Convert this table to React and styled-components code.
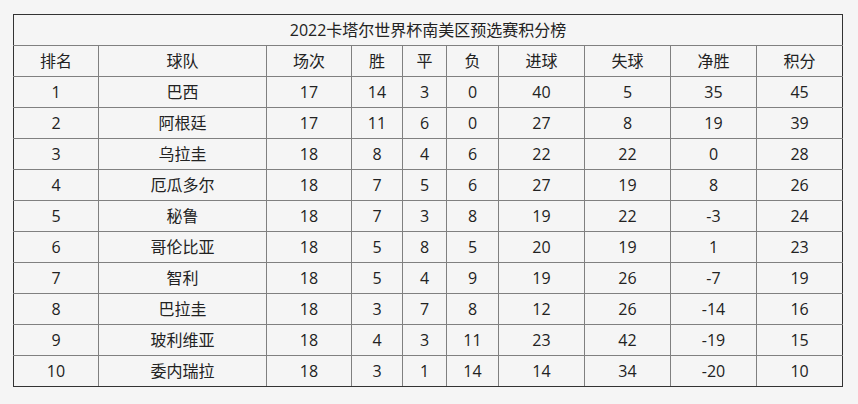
import { createGlobalStyle } from 'styled-components'
import styled from 'styled-components'

const GlobalStyle = createGlobalStyle`
  html, body {
    margin: 0;
    padding: 0;
    background: #f5f5f5;
  }
  body {
    font-family: "Open Sans", "Noto Sans CJK SC", sans-serif;
    color: #222;
  }
`

const columns = [
  { label: '排名', width: 85 },
  { label: '球队', width: 168 },
  { label: '场次', width: 85 },
  { label: '胜', width: 51 },
  { label: '平', width: 44 },
  { label: '负', width: 52 },
  { label: '进球', width: 86 },
  { label: '失球', width: 86 },
  { label: '净胜', width: 86 },
  { label: '积分', width: 86 },
]

const rows = [
  [1, '巴西', 17, 14, 3, 0, 40, 5, 35, 45],
  [2, '阿根廷', 17, 11, 6, 0, 27, 8, 19, 39],
  [3, '乌拉圭', 18, 8, 4, 6, 22, 22, 0, 28],
  [4, '厄瓜多尔', 18, 7, 5, 6, 27, 19, 8, 26],
  [5, '秘鲁', 18, 7, 3, 8, 19, 22, -3, 24],
  [6, '哥伦比亚', 18, 5, 8, 5, 20, 19, 1, 23],
  [7, '智利', 18, 5, 4, 9, 19, 26, -7, 19],
  [8, '巴拉圭', 18, 3, 7, 8, 12, 26, -14, 16],
  [9, '玻利维亚', 18, 4, 3, 11, 23, 42, -19, 15],
  [10, '委内瑞拉', 18, 3, 1, 14, 14, 34, -20, 10],
]

const Page = styled.div`
  padding: 14px 13px;
`

const Table = styled.table`
  border-collapse: collapse;
  table-layout: fixed;
  width: 830px;
  font-size: 16px;
  line-height: 20px;

  th:first-child,
  td:first-child {
    border-left-color: #333;
  }
  th:last-child,
  td:last-child {
    border-right-color: #333;
  }
  tbody tr:last-child td {
    border-bottom-color: #333;
  }
`

const Title = styled.th`
  height: 30px;
  padding: 0;
  font-weight: normal;
  text-align: center;
  border: 1px solid #808080;
  border-top-color: #333;
`

const HeadCell = styled.th`
  height: 30px;
  padding: 0;
  font-weight: normal;
  text-align: center;
  border: 1px solid #808080;
`

const Cell = styled.td`
  height: 30px;
  padding: 0;
  text-align: center;
  border: 1px solid #808080;
`

export default function App() {
  return (
    <>
      <GlobalStyle />
      <Page>
        <Table>
          <colgroup>
            {columns.map((c) => (
              <col key={c.label} style={{ width: c.width }} />
            ))}
          </colgroup>
          <thead>
            <tr>
              <Title colSpan={columns.length}>2022卡塔尔世界杯南美区预选赛积分榜</Title>
            </tr>
            <tr>
              {columns.map((c) => (
                <HeadCell key={c.label}>{c.label}</HeadCell>
              ))}
            </tr>
          </thead>
          <tbody>
            {rows.map((r) => (
              <tr key={r[0]}>
                {r.map((v, i) => (
                  <Cell key={i}>{v}</Cell>
                ))}
              </tr>
            ))}
          </tbody>
        </Table>
      </Page>
    </>
  )
}
